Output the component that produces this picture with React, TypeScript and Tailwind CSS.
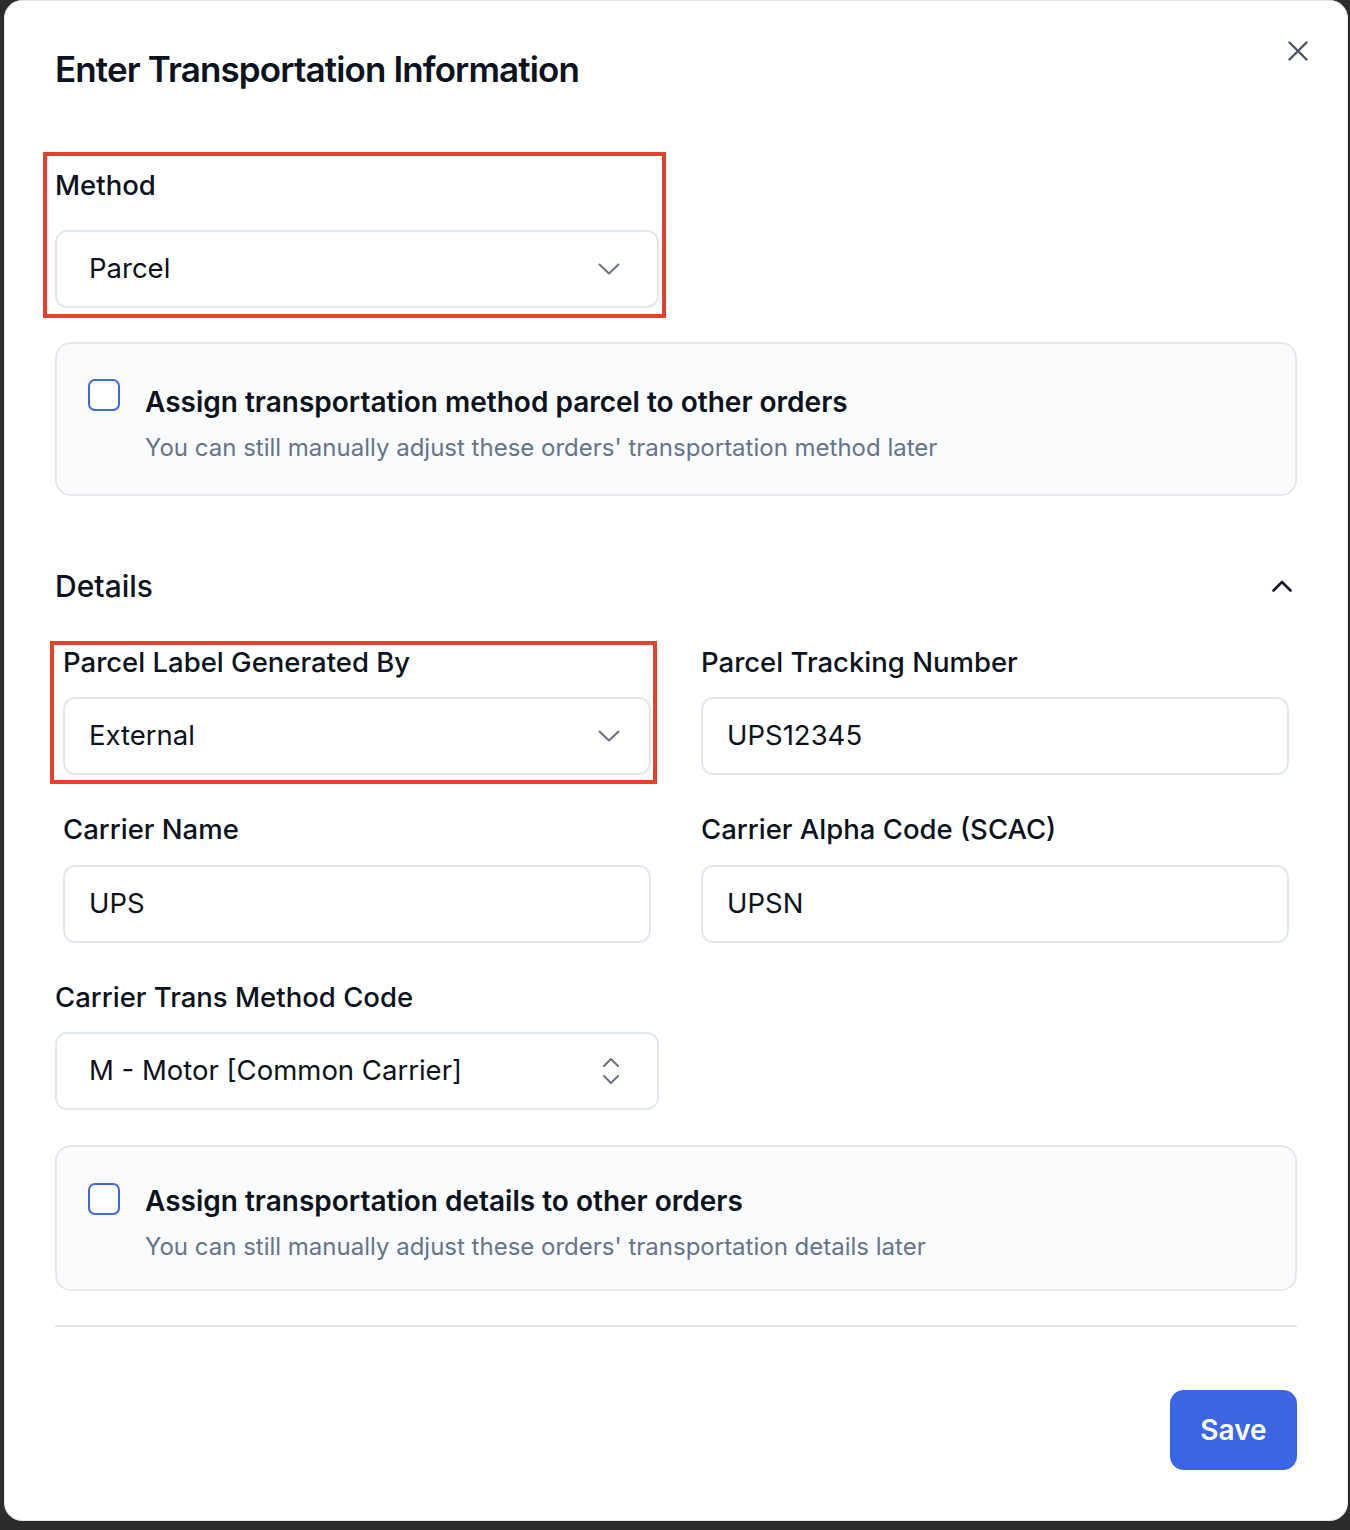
const ChevronDown = () => (
  <svg width="22" height="12" viewBox="0 0 22 12" fill="none" className="shrink-0">
    <path d="M1.5 1.5L11 10.5L20.5 1.5" stroke="#6b7280" strokeWidth="2" strokeLinecap="round" strokeLinejoin="round" />
  </svg>
);

const ChevronUpDown = () => (
  <svg width="18" height="28" viewBox="0 0 18 28" fill="none" className="shrink-0">
    <path d="M2 9L9 2L16 9" stroke="#6b7280" strokeWidth="2" strokeLinecap="round" strokeLinejoin="round" />
    <path d="M2 19L9 26L16 19" stroke="#6b7280" strokeWidth="2" strokeLinecap="round" strokeLinejoin="round" />
  </svg>
);

const RedBox = ({ className }: { className: string }) => (
  <div className={`pointer-events-none absolute border-[4px] border-[#e5412c] ${className}`} />
);

const SelectBox = ({
  value,
  icon,
  pad = "pl-[32px] pr-[37px]",
}: {
  value: string;
  icon?: "updown";
  pad?: string;
}) => (
  <div className={`h-[78px] rounded-[12px] border-2 border-[#e2e8f0] bg-white flex items-center justify-between ${pad}`}>
    <span className="text-[27.5px] text-[#0b1220]">{value}</span>
    {icon === "updown" ? <ChevronUpDown /> : <ChevronDown />}
  </div>
);

const InputBox = ({ value }: { value: string }) => (
  <div className="h-[78px] rounded-[12px] border-2 border-[#e2e8f0] bg-white flex items-center pl-[24px]">
    <span className="text-[27.5px] text-[#0b1220]">{value}</span>
  </div>
);

const Label = ({ children }: { children: string }) => (
  <div className="text-[27.5px] leading-[36px] font-medium text-[#0b1220]">{children}</div>
);

const AssignCard = ({
  title,
  hint,
  className,
  textOffset,
}: {
  title: string;
  hint: string;
  className: string;
  textOffset: string;
}) => (
  <div className={`rounded-[16px] border-2 border-[#e5e7eb] bg-[#fafbfc] pl-[31px] ${className}`}>
    <div className="flex items-start gap-[25px]">
      <div className="w-[32px] h-[32px] shrink-0 rounded-[7px] border-2 border-[#4169e1] bg-white" />
      <div className={textOffset}>
        <div className="text-[28px] leading-[36px] font-semibold text-[#0b1220]">{title}</div>
        <div className="mt-[12px] text-[24px] leading-[32px] text-[#64748b]">{hint}</div>
      </div>
    </div>
  </div>
);

export default function App() {
  return (
    <div className="min-h-[1530px] bg-[#2c2c2c] pl-[4px] pr-[2px] font-['Inter',sans-serif]">
      <div className="relative h-[1521px] rounded-[18px] border border-[#e2e8f0] bg-white px-[50px] pt-[48px]">
        <button className="absolute top-[40px] right-[39px] w-[20px] h-[20px]">
          <svg width="20" height="20" viewBox="0 0 20 20" fill="none">
            <path d="M1.5 1.5L18.5 18.5M18.5 1.5L1.5 18.5" stroke="#4b5563" strokeWidth="2.4" strokeLinecap="round" />
          </svg>
        </button>

        <h2 className="h-[40px] text-[35px] leading-[40px] font-semibold tracking-[-0.025em] text-[#0b1220]">
          Enter Transportation Information
        </h2>

        <div className="relative mt-[78px] w-[604px]">
          <RedBox className="-top-[15px] -left-[12px] -right-[7px] -bottom-[10px]" />
          <Label>Method</Label>
          <div className="mt-[27px]">
            <SelectBox value="Parcel" />
          </div>
        </div>

        <AssignCard
          className="mt-[34px] h-[154px] pt-[35px]"
          textOffset="pt-[5px]"
          title="Assign transportation method parcel to other orders"
          hint="You can still manually adjust these orders' transportation method later"
        />

        <div className="mt-[72px] flex items-center justify-between">
          <div className="text-[30px] leading-[36px] font-medium text-[#0b1220]">Details</div>
          <svg width="20" height="12" viewBox="0 0 20 12" fill="none" className="mr-[5px]">
            <path d="M1.5 10.5L10 2L18.5 10.5" stroke="#111827" strokeWidth="2.6" strokeLinecap="round" strokeLinejoin="round" />
          </svg>
        </div>

        <div className="mt-[40px] px-[8px] grid grid-cols-2 gap-x-[50px] gap-y-[36px]">
          <div className="relative">
            <RedBox className="-top-[3px] -left-[13px] -right-[6px] -bottom-[9px]" />
            <Label>Parcel Label Generated By</Label>
            <div className="mt-[17px]">
              <SelectBox value="External" pad="pl-[24px] pr-[29px]" />
            </div>
          </div>
          <div>
            <Label>Parcel Tracking Number</Label>
            <div className="mt-[17px]">
              <InputBox value="UPS12345" />
            </div>
          </div>
          <div>
            <Label>Carrier Name</Label>
            <div className="mt-[18px]">
              <InputBox value="UPS" />
            </div>
          </div>
          <div>
            <Label>Carrier Alpha Code (SCAC)</Label>
            <div className="mt-[18px]">
              <InputBox value="UPSN" />
            </div>
          </div>
        </div>

        <div className="mt-[36px] w-[604px]">
          <Label>Carrier Trans Method Code</Label>
          <div className="mt-[17px]">
            <SelectBox value="M - Motor [Common Carrier]" icon="updown" />
          </div>
        </div>

        <AssignCard
          className="mt-[35px] h-[146px] pt-[36px]"
          textOffset="pt-[0px]"
          title="Assign transportation details to other orders"
          hint="You can still manually adjust these orders' transportation details later"
        />

        <div className="mt-[34px] h-[2px] bg-[#e2e8f0]" />

        <div className="mt-[63px] flex justify-end">
          <button className="h-[80px] w-[127px] rounded-[14px] bg-[#3a66e3] text-[28px] font-semibold text-white">
            Save
          </button>
        </div>
      </div>
    </div>
  );
}
